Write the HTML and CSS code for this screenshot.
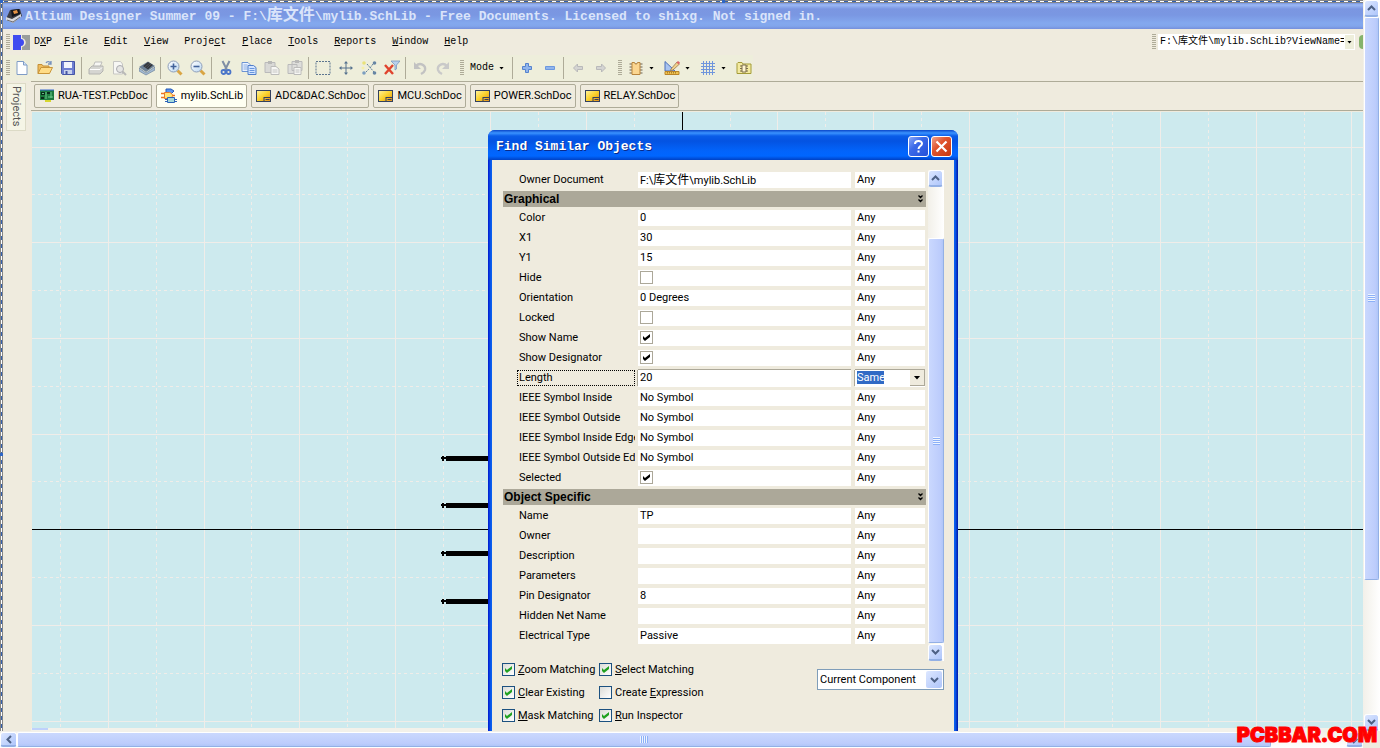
FILE: index.html
```html
<!DOCTYPE html>
<html lang="en">
<head>
<meta charset="utf-8">
<title>Altium Designer Summer 09</title>
<link rel="stylesheet" href="styles.css">
</head>
<body>
<svg width="0" height="0" class="defs" aria-hidden="true">
  <defs>
    <linearGradient id="gold" x1="0" y1="0" x2="1" y2="1"><stop offset="0" stop-color="#fff3a0"/><stop offset=".5" stop-color="#fbd22c"/><stop offset="1" stop-color="#e08a1c"/></linearGradient>
    <linearGradient id="lens" x1="0" y1="0" x2="1" y2="1"><stop offset="0" stop-color="#fff"/><stop offset="1" stop-color="#bcd8f2"/></linearGradient>
    <symbol id="sheet" viewBox="0 0 16 14"><rect x=".5" y="1.500" width="14" height="11" fill="url(#gold)" stroke="#33405e"/><path d="M8 8.500h6.500M8 8v4.500M9.500 10.500h4" stroke="#33405e" fill="none"/></symbol>
    <symbol id="chev-up" viewBox="0 0 9 6"><path d="M1 5 4.500 1.500 8 5" fill="none" stroke="#4d6185" stroke-width="2"/></symbol>
    <symbol id="chev-down" viewBox="0 0 9 6"><path d="M1 1 4.500 4.500 8 1" fill="none" stroke="#4d6185" stroke-width="2"/></symbol>
    <symbol id="collapse" viewBox="0 0 5 8"><path d="M.5 .5 2.500 2.500 4.500 .5M.5 4.500 2.500 6.500 4.500 4.500" fill="none" stroke="#000" stroke-width="1.300"/></symbol>
  </defs>
</svg>
<div class="page">
  <div class="app">
    <div class="marquee-top"></div>
    <header class="titlebar">
      <svg width="18" height="18" viewBox="0 0 18 18"><path d="M5 3 15 2l2 7-9 7-7-4z" fill="#3c3d44"/><path d="m6 3 8-1 1 5-8 3z" fill="#15161c"/><path d="m8 4 4-1 1 3-4 1z" fill="#e69445"/><path d="m1 10 6 2 9-5v3l-8 6-7-3z" fill="#d7d8dc"/><path d="m2 13 6 2 7-5" stroke="#6d6e75" fill="none"/></svg>
      <h1>Altium Designer Summer 09 - F:\<span class="cjk">库文件</span>\mylib.SchLib - Free Documents. Licensed to shixg. Not signed in.</h1>
    </header>
    <nav class="menubar">
      <span class="grip"></span>
      <button class="menu dxp"><svg width="17" height="15" viewBox="0 0 17 15"><path d="M0 0h8v4c4 0 4 7 0 7v4H0z" fill="#3f4bf0"/><path d="M9 0h8v15H9v-3c5-1 5-8 0-9z" fill="#999d9b"/></svg><span>D<u>X</u>P</span></button>
      <button class="menu"><u>F</u>ile</button>
      <button class="menu"><u>E</u>dit</button>
      <button class="menu"><u>V</u>iew</button>
      <button class="menu">Proje<u>c</u>t</button>
      <button class="menu"><u>P</u>lace</button>
      <button class="menu"><u>T</u>ools</button>
      <button class="menu"><u>R</u>eports</button>
      <button class="menu"><u>W</u>indow</button>
      <button class="menu"><u>H</u>elp</button>
      <div class="address">
        <span class="grip"></span>
        <input type="text" aria-label="Address" value="F:\库文件\mylib.SchLib?ViewName=">
        <button class="drop" aria-label="Address list"><i class="caret"></i></button>
        <button class="go" aria-label="Go"></button>
      </div>
    </nav>
    <div class="toolbar">
      <span class="grip"></span>
      <button class="tool" aria-label="New"><svg viewBox="0 0 16 16"><path d="M3 1.500h6.500L13 5v9.500H3z" fill="#fff" stroke="#7f9cc6"/><path d="M9.500 1.500V5H13" fill="#d5e3f7" stroke="#7f9cc6"/></svg></button>
      <button class="tool" aria-label="Open"><svg viewBox="0 0 16 16"><path d="M1 13.500V4.500h4l1 1.500h6v7.500z" fill="#efbd5f" stroke="#c58f35"/><path d="m1 13.500 3-6h11.500l-3 6z" fill="#ffdc86" stroke="#c99539"/><path d="M9 3c1-2 4-2 5 1m0-3v3h-3" fill="none" stroke="#7792bd" stroke-width="1.300"/></svg></button>
      <button class="tool" aria-label="Save"><svg viewBox="0 0 16 16"><path d="M1.500 1.500h13v13h-12l-1-1z" fill="#6f7fd2" stroke="#4656a5"/><path d="M4 2h8v6H4z" fill="#f1f4fc"/><path d="M4 10h8v4H4z" fill="#c8d2ec"/><path d="M5.500 11h2v3h-2z" fill="#4656a5"/></svg></button>
      <span class="sep"></span>
      <button class="tool" aria-label="Print"><svg viewBox="0 0 16 16"><path d="m5 7 2-5h7l-2 5z" fill="#f7f7f4" stroke="#bdbdba"/><path d="m1 9 3-3h11v5l-3 3H1z" fill="#d5d5d1" stroke="#b4b4b1"/><path d="M2 9.500h10l2-2" stroke="#fff" fill="none"/></svg></button>
      <button class="tool" aria-label="Print preview"><svg viewBox="0 0 16 16"><path d="M2.500 1.500h7l2 2.500v10h-9z" fill="#f7f7f4" stroke="#c6c6c3"/><circle cx="9" cy="9" r="3.500" fill="#e6e6e4" stroke="#aaaaae"/><path d="m11.500 11.500 3.500 3.500" stroke="#b9b9b7" stroke-width="2"/></svg></button>
      <span class="sep"></span>
      <button class="tool" aria-label="Browse component"><svg viewBox="0 0 16 16"><path d="m0 8 7 5 9-6v3l-9 5-7-4z" fill="#a5bbd3" stroke="#5e7690" stroke-width=".6"/><path d="m0 7 9-5.500L16 6l-9 6z" fill="#6e8298"/><path d="m4 6 5-4 5 3-5 4.500z" fill="#35383e"/><path d="m6 7 5-4M8 8l4-4" stroke="#5b6068" stroke-width=".6"/></svg></button>
      <span class="sep"></span>
      <button class="tool" aria-label="Zoom in"><svg viewBox="0 0 16 16"><path d="m10.500 10.500 4 4" stroke="#d9a544" stroke-width="3"/><circle cx="6.500" cy="6.500" r="5.500" fill="url(#lens)" stroke="#8e9fb9"/><path d="M3.500 6.500h6m-3-3v6" stroke="#41629a" stroke-width="1.600"/></svg></button>
      <button class="tool" aria-label="Zoom out"><svg viewBox="0 0 16 16"><path d="m10.500 10.500 4 4" stroke="#d9a544" stroke-width="3"/><circle cx="6.500" cy="6.500" r="5.500" fill="url(#lens)" stroke="#8e9fb9"/><path d="M3.500 6.500h6" stroke="#41629a" stroke-width="1.600"/></svg></button>
      <span class="sep"></span>
      <button class="tool" aria-label="Cut"><svg viewBox="0 0 16 16"><path d="m4.500 1 4.500 9M11.500 1 7 10" stroke="#7f8ea5" stroke-width="2" fill="none"/><circle cx="5.500" cy="12" r="2" fill="none" stroke="#4a75c9" stroke-width="1.800"/><circle cx="10.500" cy="12" r="2" fill="none" stroke="#4a75c9" stroke-width="1.800"/></svg></button>
      <button class="tool" aria-label="Copy"><svg viewBox="0 0 16 16"><path d="M1 2.500h6l2 2v7H1z" fill="#eaf2ff" stroke="#6c93d2"/><path d="M2.500 5h4m-4 2h4m-4 2h4" stroke="#88abe2"/><path d="M7 5.500h5.500l2.500 2v7H7z" fill="#d3e4ff" stroke="#4f7ecb"/><path d="M8.500 8.500h5m-5 2h5m-5 2h5" stroke="#6896dd"/></svg></button>
      <button class="tool" aria-label="Paste"><svg viewBox="0 0 16 16"><path d="M1 2.500h10v10H1z" fill="#d9d9d6" stroke="#bababa"/><path d="M4 1h4v3H4z" fill="#b9b9b7"/><path d="M7 6.500h5l3 2.500v5.500H7z" fill="#f7f7f4" stroke="#bcbcba"/><path d="M8.500 10h5m-5 2h5" stroke="#c5c5c3"/></svg></button>
      <button class="tool" aria-label="Smart paste"><svg viewBox="0 0 16 16"><path d="M5 1.500h10v9H5zM1 4.500h9v9H1z" fill="#dededb" stroke="#bababa"/><path d="M8 0h4v3H8z" fill="#b9b9b7"/><path d="M7 7.500h7v7H7z" fill="#f7f7f4" stroke="#bcbcba"/><path d="M8.500 10h4m-4 2h4" stroke="#c0c0be"/></svg></button>
      <span class="sep"></span>
      <button class="tool" aria-label="Select area"><svg viewBox="0 0 16 16"><path d="M1 1.500h14v13H1z" fill="none" stroke="#5d7690" stroke-dasharray="2 1"/></svg></button>
      <button class="tool" aria-label="Move"><svg viewBox="0 0 16 16"><path d="M8 2v12M2 8h12" stroke="#56728e"/><path d="m8 1 2 2.500H6zM8 15l2-2.500H6zM1 8l2.500-2v4zM15 8l-2.500-2v4z" fill="#56728e"/></svg></button>
      <button class="tool" aria-label="Deselect"><svg viewBox="0 0 16 16"><path d="m6 4 7 8M12 4l-3 4M5 12l3-3" stroke="#60809c" stroke-dasharray="2 1"/><circle cx="3" cy="3" r="1.800" fill="#e9e27a"/><circle cx="3" cy="13" r="1.800" fill="#7d9fc0"/><circle cx="2" cy="8" r="1.500" fill="#f5efaa"/><circle cx="13.500" cy="3" r="1.800" fill="#6685a4"/><circle cx="13.500" cy="13" r="1.800" fill="#6685a4"/></svg></button>
      <button class="tool" aria-label="Clear filter"><svg viewBox="0 0 16 16"><path d="M7 1h9l-3.500 4v4L11 10V5z" fill="#b9d0ed" stroke="#7a97bd" stroke-width=".8"/><path d="m1 5 8 9M9 5l-8 9" stroke="#e0442e" stroke-width="2.400"/></svg></button>
      <span class="sep"></span>
      <button class="tool" aria-label="Undo"><svg viewBox="0 0 16 16"><path d="M4 6c4-4 10-1 9 4-.5 2-2 3-4 4" fill="none" stroke="#c2c2c2" stroke-width="2.400"/><path d="M2 2v7h7z" fill="#c2c2c2"/></svg></button>
      <button class="tool" aria-label="Redo"><svg viewBox="0 0 16 16"><path d="M12 6C8 2 2 5 3 10c.5 2 2 3 4 4" fill="none" stroke="#c9c9c9" stroke-width="2.400"/><path d="M14 2v7H7z" fill="#c9c9c9"/></svg></button>
      <span class="grip group"></span>
      <button class="mode">Mode <i class="caret"></i></button>
      <span class="sep"></span>
      <button class="tool" aria-label="Add"><svg viewBox="0 0 16 16"><path d="M6.500 3.500h3v3h3v3h-3v3h-3v-3h-3v-3h3z" fill="#91b5ec" stroke="#5583cf"/></svg></button>
      <button class="tool" aria-label="Remove"><svg viewBox="0 0 16 16"><path d="M3.500 6.500h9v3h-9z" fill="#91b5ec" stroke="#6c98df"/></svg></button>
      <span class="sep"></span>
      <button class="tool" aria-label="Back"><svg viewBox="0 0 16 16"><path d="m3.500 8 4-4v2.500h5v3h-5V12z" fill="#d4d4d2" stroke="#b9b9ba"/></svg></button>
      <button class="tool" aria-label="Forward"><svg viewBox="0 0 16 16"><path d="m12.500 8-4-4v2.500h-5v3h5V12z" fill="#d4d4d2" stroke="#b9b9ba"/></svg></button>
      <span class="grip group"></span>
      <button class="tool" aria-label="Place part"><svg viewBox="0 0 16 16"><path d="M1.500 4h13m-13 3h13m-13 3h13m-13 3h13" stroke="#6b6353"/><path d="M4 2.500h2.500c0 2 3 2 3 0H12v12H4z" fill="#fbd690" stroke="#b9853d"/></svg></button>
      <button class="drop" aria-label="Place part list"><i class="caret"></i></button>
      <button class="tool" aria-label="Drawing tools"><svg viewBox="0 0 16 16"><path d="M1 1.500V11h10z" fill="#a9c4f0" stroke="#4b6fb9"/><path d="m7 9 6-7 2.500 2L9 10l-2.500.5z" fill="#f2d28b" stroke="#8b6b45" stroke-width=".7"/><path d="m12.500 2.500 1.500-1.500 2 1.500-1.500 2z" fill="#d66"/><path d="M1 11.500h14v3H1z" fill="#f1c350" stroke="#b98529"/><path d="M3.500 12v1.500m2-1.500v1.500m2-1.500v1.500m2-1.500v1.500m2-1.500v1.500" stroke="#8c651e" stroke-width=".7"/></svg></button>
      <button class="drop" aria-label="Drawing tools list"><i class="caret"></i></button>
      <button class="tool" aria-label="Grid"><svg viewBox="0 0 16 16"><path d="M3.500 1v14m3-14v14m3-14v14m3-14v14M1 3.500h14m-14 3h14m-14 3h14m-14 3h14" stroke="#7096dc"/></svg></button>
      <button class="drop" aria-label="Grid list"><i class="caret"></i></button>
      <button class="tool" aria-label="Library"><svg viewBox="0 0 16 16"><path d="M1 13.500v-10l1-1h4l1 1.500h8v9.500z" fill="#f3eaa0" stroke="#a49b39"/><path d="M4 6h8m-8 2.500h8M4 11h8" stroke="#7a6d4c"/><path d="M6 5h4v7H6z" fill="#fff5d2" stroke="#7a6d4c"/></svg></button>
    </div>
    <div class="body">
      <aside class="side"><button class="side-tab">Projects</button></aside>
      <main class="main">
        <div class="tabs">
          <button class="tab"><svg width="16" height="14" viewBox="0 0 16 14"><path d="M1 1h14v10H1z" fill="#1d7a3e"/><path d="M1 1h14" stroke="#3b6bd0"/><path d="M2 3h4v3H2zM2 8h3v2H2zM8 3h3v2H8z" fill="#0a2b1c"/><path d="M7 3v7M12 3v6M3 4.500h2M9 8h5" stroke="#7fe0a0" fill="none" stroke-width=".8"/><path d="M6 11h6v2H6z" fill="#d6d62f"/></svg>RUA-TEST.PcbDoc</button>
          <button class="tab active"><svg width="17" height="16" viewBox="0 0 17 16"><path d="M5 1h5l3 2-3 3H5z" fill="#5c95f0" stroke="#2256b5"/><path d="M0 5.500h4m-4 4h4m7-2h3" stroke="#ed741f" stroke-width="1.500"/><path d="M3.500 4.500h5c4 1 4 5 0 6h-5z" fill="#ffe579" stroke="#e8792b"/><path d="M6.500 9.500h7v5h-7z" fill="#a4d8d8" stroke="#2a62b8"/><path d="M4 11.500h2m-2 2h2m8-2h2m-2 2h2" stroke="#2a62b8"/></svg>mylib.SchLib</button>
          <button class="tab"><svg width="16" height="14"><use href="#sheet"/></svg>ADC&amp;DAC.SchDoc</button>
          <button class="tab"><svg width="16" height="14"><use href="#sheet"/></svg>MCU.SchDoc</button>
          <button class="tab"><svg width="16" height="14"><use href="#sheet"/></svg>POWER.SchDoc</button>
          <button class="tab"><svg width="16" height="14"><use href="#sheet"/></svg>RELAY.SchDoc</button>
        </div>
        <div class="canvas">
          <svg class="drawing" width="100%" height="100%" shape-rendering="crispEdges">
            <g class="minor"><path d="M28.500 0v2000M124.500 0v2000M219.500 0v2000M315.500 0v2000M411.500 0v2000M506.500 0v2000M602.500 0v2000M698.500 0v2000M793.500 0v2000M889.500 0v2000M985.500 0v2000M1080.500 0v2000M1176.500 0v2000M1272.500 0v2000"/><path d="M0 82.500h4000M0 178.500h4000M0 274.500h4000M0 369.500h4000M0 465.500h4000M0 561.500h4000"/></g>
            <path class="major" d="M76.500 0v2000M172.500 0v2000M267.500 0v2000M363.500 0v2000M458.500 0v2000M554.500 0v2000M745.500 0v2000M841.500 0v2000M937.500 0v2000M1032.500 0v2000M1128.500 0v2000M1224.500 0v2000M1319.500 0v2000M0 35.500h4000M0 130.500h4000M0 226.500h4000M0 322.500h4000M0 513.500h4000M0 609.500h4000"/>
            <path class="axis" d="M650.500 0v2000M0 417.500h4000"/>
            <g class="pins"><path d="M414 346.500h60M414 393.500h60M414 441.500h60M414 489.500h60" stroke-width="5"/><path d="M409 346h5M411 344v5M409 393h5M411 391v5M409 441h5M411 439v5M409 489h5M411 487v5" stroke-width="2"/></g>
          </svg>
        </div>
        <div class="inner-scroll"><i></i></div>
      </main>
    </div>
    <div class="marquee-left"></div>
    <i class="handle corner"></i><i class="handle top"></i><i class="handle left"></i>

    <section class="dialog" role="dialog" aria-labelledby="dlg-title">
      <header class="dlg-title">
        <h2 id="dlg-title">Find Similar Objects</h2>
        <button class="help" aria-label="Help"><svg width="19" height="19" viewBox="0 0 19 19"><path d="M6 7c0-4 7-4 7-.5 0 2.500-3.500 2.500-3.500 5.500M9.500 13.500v2" fill="none" stroke="#fff" stroke-width="2"/></svg></button>
        <button class="close" aria-label="Close"><svg width="19" height="19" viewBox="0 0 19 19"><path d="m4.500 4.500 10 10m0-10-10 10" stroke="#fff" stroke-width="2.200"/></svg></button>
      </header>
      <div class="dlg-body">
        <div class="pane">
          <table class="props">
            <colgroup><col class="c-name"><col class="c-value"><col class="c-match"></colgroup>
            <tbody>
            <tr><th><div>Owner Document</div></th><td><div>F:\<span class="cjk">库文件</span>\mylib.SchLib</div></td><td><div>Any</div></td></tr>
            <tr class="group"><th colspan="3"><div>Graphical<svg width="5" height="8"><use href="#collapse"/></svg></div></th></tr>
            <tr><th><div>Color</div></th><td><div>0</div></td><td><div>Any</div></td></tr>
            <tr><th><div>X1</div></th><td><div>30</div></td><td><div>Any</div></td></tr>
            <tr><th><div>Y1</div></th><td><div>15</div></td><td><div>Any</div></td></tr>
            <tr><th><div>Hide</div></th><td><div><input type="checkbox" aria-label="Hide"></div></td><td><div>Any</div></td></tr>
            <tr><th><div>Orientation</div></th><td><div>0 Degrees</div></td><td><div>Any</div></td></tr>
            <tr><th><div>Locked</div></th><td><div><input type="checkbox" aria-label="Locked"></div></td><td><div>Any</div></td></tr>
            <tr><th><div>Show Name</div></th><td><div><input type="checkbox" aria-label="Show Name" checked></div></td><td><div>Any</div></td></tr>
            <tr><th><div>Show Designator</div></th><td><div><input type="checkbox" aria-label="Show Designator" checked></div></td><td><div>Any</div></td></tr>
            <tr class="current"><th><div>Length</div></th><td><div><input type="text" aria-label="Length" value="20"></div></td><td><div><select aria-label="Length match"><option>Same</option><option>Any</option><option>Different</option></select><span class="arrow"><i class="caret"></i></span></div></td></tr>
            <tr><th><div>IEEE Symbol Inside</div></th><td><div>No Symbol</div></td><td><div>Any</div></td></tr>
            <tr><th><div>IEEE Symbol Outside</div></th><td><div>No Symbol</div></td><td><div>Any</div></td></tr>
            <tr><th><div>IEEE Symbol Inside Edge</div></th><td><div>No Symbol</div></td><td><div>Any</div></td></tr>
            <tr><th><div>IEEE Symbol Outside Edge</div></th><td><div>No Symbol</div></td><td><div>Any</div></td></tr>
            <tr><th><div>Selected</div></th><td><div><input type="checkbox" aria-label="Selected" checked></div></td><td><div>Any</div></td></tr>
            <tr class="group"><th colspan="3"><div>Object Specific<svg width="5" height="8"><use href="#collapse"/></svg></div></th></tr>
            <tr><th><div>Name</div></th><td><div>TP</div></td><td><div>Any</div></td></tr>
            <tr><th><div>Owner</div></th><td><div></div></td><td><div>Any</div></td></tr>
            <tr><th><div>Description</div></th><td><div></div></td><td><div>Any</div></td></tr>
            <tr><th><div>Parameters</div></th><td><div></div></td><td><div>Any</div></td></tr>
            <tr><th><div>Pin Designator</div></th><td><div>8</div></td><td><div>Any</div></td></tr>
            <tr><th><div>Hidden Net Name</div></th><td><div></div></td><td><div>Any</div></td></tr>
            <tr><th><div>Electrical Type</div></th><td><div>Passive</div></td><td><div>Any</div></td></tr>
            </tbody>
          </table>
          <div class="scroll vert small">
            <button aria-label="Scroll up"><svg width="9" height="6"><use href="#chev-up"/></svg></button>
            <div class="thumb list-thumb"><i></i></div>
            <button aria-label="Scroll down"><svg width="9" height="6"><use href="#chev-down"/></svg></button>
          </div>
        </div>
        <div class="footer">
          <div class="options">
            <label><input type="checkbox" checked><span><u>Z</u>oom Matching</span></label>
            <label><input type="checkbox" checked><span><u>S</u>elect Matching</span></label>
            <label><input type="checkbox" checked><span><u>C</u>lear Existing</span></label>
            <label><input type="checkbox"><span>Create <u>E</u>xpression</span></label>
            <label><input type="checkbox" checked><span><u>M</u>ask Matching</span></label>
            <label><input type="checkbox" checked><span><u>R</u>un Inspector</span></label>
          </div>
          <div class="scope">
            <select aria-label="Scope"><option>Current Component</option><option>All Components</option></select>
            <span class="arrow"><svg width="9" height="6"><use href="#chev-down"/></svg></span>
          </div>
        </div>
      </div>
    </section>
  </div>
  <div class="scroll vert">
    <button aria-label="Scroll up"><svg width="9" height="6"><use href="#chev-up"/></svg></button>
    <div class="thumb page-thumb"><i></i></div>
    <button aria-label="Scroll down"><svg width="9" height="6"><use href="#chev-down"/></svg></button>
  </div>
  <div class="scroll horiz">
    <button aria-label="Scroll left"><svg width="6" height="9" viewBox="0 0 6 9"><path d="M5 1 1.500 4.500 5 8" fill="none" stroke="#4d6185" stroke-width="2"/></svg></button>
    <div class="thumb wide-thumb"><i></i></div>
    <button aria-label="Scroll right"><svg width="6" height="9" viewBox="0 0 6 9"><path d="M1 1 4.500 4.500 1 8" fill="none" stroke="#4d6185" stroke-width="2"/></svg></button>
  </div>
  <div class="watermark">PCBBAR.COM</div>
</div>
</body>
</html>
```
FILE: styles.css
```css
* { box-sizing: border-box; }
html, body { height: 100%; margin: 0; }
body {
  overflow: hidden;
  font: 11px/16px Roboto, "Noto Sans CJK SC", sans-serif;
  color: #000;
  background: #efebde;
}
button, input, select { font: inherit; color: inherit; margin: 0; padding: 0; border: 0; border-radius: 0; background: none; }
button { display: flex; align-items: center; justify-content: center; flex: none; }
select, input[type="checkbox"] { appearance: none; }
h1, h2 { margin: 0; }
svg { display: block; flex: none; }
.defs { position: absolute; }

.page { position: relative; height: 100%; display: grid; grid-template: minmax(0, 1fr) 17px / minmax(0, 1fr) 17px; }
.app { position: relative; display: flex; flex-direction: column; overflow: hidden; padding-left: 3px; background: #efebde; }

/* Selection outline around the embedded window */
.marquee-top, .marquee-left { border: 0 solid #858585; flex: none; }
.marquee-top { height: 3px; margin-left: -3px; border-width: 1px 0; background: repeating-linear-gradient(90deg, #fff 0 4px, #3461ae 4px 8px); }
.marquee-left { position: absolute; left: 0; top: 0; bottom: 0; width: 3px; border-width: 0 1px; background: repeating-linear-gradient(#fff 0 4px, #3461ae 4px 8px); }
.handle { position: absolute; width: 3px; height: 3px; background: #2f66c4; }
.handle.corner { left: 0; top: 0; }
.handle.top { left: 53%; top: 0; }
.handle.left { left: 0; top: 62%; }

.titlebar {
  display: flex; align-items: center; gap: 2px; height: 26px; flex: none; padding-left: 2px;
  background: linear-gradient(#7a96df, #9bb8f5 2px, #7b96e1 6px, #7a97e2 12px, #83a8ee 20px, #82a6ec 23px, #7590dc);
}
.titlebar h1 { font: bold 13px/20px "Liberation Mono", "Noto Sans CJK SC", monospace; color: #dae4fa; white-space: nowrap; }
.titlebar .cjk { font-size: 16px; }

.grip { flex: none; width: 4px; height: 16px; background: repeating-linear-gradient(#aeab98 0 1px, transparent 1px 2px); }
.menubar { display: flex; align-items: center; height: 26px; flex: none; padding-left: 3px; font: 10px/16px "Liberation Mono", "Noto Sans CJK SC", monospace; }
.menu { margin-right: 16px; }
.menu.dxp { gap: 4px; margin: 0 12px 0 3px; }
.address { display: flex; align-items: center; height: 26px; margin-left: auto; overflow: hidden; width: 211px; }
.address input { flex: 1; min-width: 0; height: 16px; margin-left: 2px; padding-left: 2px; background: #fff; }
.address .drop { width: 11px; height: 16px; background: #eeeedb; border: 1px solid #fff; }
.go { width: 4px; height: 14px; margin-left: 4px; border-radius: 8px 0 0 8px; background: #85b36b; }
.caret { display: block; flex: none; width: 5px; height: 3px; background: #000; clip-path: polygon(0 0, 100% 0, 50% 100%); }

.toolbar { display: flex; align-items: center; height: 26px; flex: none; width: 750px; padding-left: 3px; background: #eeeedb; }
.tool { width: 23px; height: 22px; }
.tool svg { width: 16px; height: 16px; }
.sep { flex: none; width: 1px; height: 22px; margin: 0 2px; background: #aeab98; }
.grip.group { margin: 0 2px 0 6px; }
.mode { justify-content: flex-start; gap: 5px; width: 44px; padding-left: 4px; font: 10px/16px "Liberation Mono", monospace; }
.toolbar .drop { justify-content: flex-start; width: 13px; height: 22px; padding-left: 2px; }

.body { flex: 1; min-height: 0; display: flex; }
.side { width: 28px; flex: none; padding: 2px 0 0 3px; }
.side-tab { width: 20px; padding: 2px 0 4px; writing-mode: vertical-rl; background: #f5f5e6; border: 1px solid #dcdac6; color: #555; }
.main { flex: 1; min-width: 0; display: flex; flex-direction: column; }
.tabs { display: flex; gap: 4px; height: 30px; flex: none; padding: 2px 3px; border: 1px solid #aeab98; border-width: 1px 0; }
.tab { height: 24px; gap: 3px; padding: 0 3px 0 4px; border: 1px solid #aeab98; border-radius: 2px; white-space: nowrap; }
.tab.active { background: #fffff2; }
.canvas { flex: 1; min-height: 0; margin: 1px 0 0 1px; background: #cdeaee; overflow: hidden; }
.minor { fill: none; stroke: #f0ede9; stroke-dasharray: 3 3; }
.major { fill: none; stroke: #f0ede9; }
.axis, .pins { fill: none; stroke: #000; }
.inner-scroll { height: 3px; flex: none; background: #f3f1ea; }
.inner-scroll i { display: block; width: 16px; height: 2px; margin-left: 1px; background: #bfd1fb; }

.dialog {
  position: absolute; left: 488px; top: 130px; width: 470px; overflow: hidden;
  border-radius: 7px 7px 0 0;
  background: linear-gradient(90deg, #0019cf, #0a5fee 3px, #0a5fee 467px, #0016a8);
}
.dlg-title {
  display: flex; align-items: center; gap: 2px; height: 30px; padding: 3px 6px 0 8px;
  background: linear-gradient(#0a46c8, #3a93ff 3px, #0a5de8 6px, #0453e2 11px, #0264fb 21px, #0066ff 26px, #0041c4);
}
.dlg-title h2 { flex: 1; font: bold 13px/20px "Liberation Mono", monospace; color: #fff; text-shadow: 1px 1px #0b2a88; }
.dlg-title button { width: 21px; height: 21px; border: 1px solid #fff; border-radius: 3px; }
.help { background: linear-gradient(135deg, #8aa8f8, #3b69e8 40%, #2350d8); }
.close { background: linear-gradient(135deg, #f0a28c, #e0552f 40%, #c8380f); }
.dlg-body { margin: 0 4px; padding: 10px 10px 10px 11px; background: #efebde; }
.pane { display: flex; justify-content: space-between; min-height: 491px; }

.props { align-self: flex-start; table-layout: fixed; width: 423px; border-collapse: separate; border-spacing: 0; }
.c-name { width: 135px; }
.c-value { width: 217px; }
.props th, .props td { padding: 2px 4px 2px 0; font-weight: normal; text-align: left; white-space: nowrap; }
.props td:last-child { padding-right: 1px; }
.props div { height: 16px; overflow: hidden; }
.props td div { padding-left: 2px; background: #fff; }
.props th div { margin: 0 -1px 0 14px; padding-left: 2px; }
.props .cjk { font-size: 12px; }
.props .group th { padding: 1px 0; font-weight: bold; font-size: 12px; font-family: "Liberation Sans", sans-serif; }
.props .group div { display: flex; align-items: center; justify-content: space-between; margin: 0; padding: 0 3px 0 1px; background: #aca899; }
.props input[type="checkbox"] { display: block; width: 13px; height: 13px; margin-top: 1px; border: 1px solid #aca899; background: #fff; }
input[type="checkbox"]:checked::before { content: ""; display: block; width: 7px; height: 7px; margin: 2px; background: #000; clip-path: polygon(0 28%, 28% 57%, 100% 0, 100% 42%, 28% 100%, 0 72%); }
.props .current th div { outline: 1px dotted #000; outline-offset: -1px; }
.props .current td div { display: flex; box-shadow: 0 -1px #aca899, -1px 0 #aca899, 0 1px #fff; }
.props input[type="text"] { width: 100%; }
.current select { flex: 1; min-width: 0; background: linear-gradient(#316ac5, #316ac5) 0 1px / 27px 13px no-repeat; color: #fff; }
.current option { color: #000; }
.current .arrow { display: flex; align-items: center; justify-content: center; width: 15px; background: #efebde; border: 1px solid #aca899; border-width: 0 1px 1px 0; pointer-events: none; }
.current .arrow .caret { width: 7px; height: 4px; }

.footer { display: flex; justify-content: space-between; align-items: flex-start; }
.options { display: grid; grid-template-columns: 97px auto; grid-auto-rows: 23px; margin: -3px 0 0 -1px; }
.options label { display: flex; align-items: center; gap: 3px; white-space: nowrap; }
.options input { flex: none; width: 13px; height: 13px; border: 1px solid #1c5180; background: linear-gradient(135deg, #dcdcd7, #fff); }
.options input:checked::before { background: #21a121; }
.scope { display: flex; width: 127px; height: 21px; margin-top: 8px; padding: 1px; border: 1px solid #7f9db9; background: #fff; }
.scope select { flex: 1; min-width: 0; padding-left: 1px; margin-right: -17px; }
.scope .arrow { display: flex; align-items: center; justify-content: center; width: 16px; margin-left: auto; border-radius: 2px; background: linear-gradient(135deg, #dde7ff, #aec5fa); pointer-events: none; }

.scroll { display: flex; background: linear-gradient(90deg, #f2f0e9, #fff); }
.scroll.vert { flex-direction: column; width: 17px; padding: 0 1px; }
.scroll.vert.small { width: 16px; padding: 0; }
.scroll.horiz { height: 17px; padding: 1px 0; background: linear-gradient(#f2f0e9, #fff); }
.scroll button { width: 15px; height: 17px; border: 1px solid #fff; border-bottom: 2px solid #93b0e5; border-radius: 3px; background: linear-gradient(135deg, #dbe6ff, #afc6fb); }
.scroll.horiz button { width: 17px; height: 15px; }
.scroll button:last-child { margin-top: auto; }
.scroll.horiz button:last-child { margin: 0 0 0 auto; }
.thumb { display: flex; align-items: center; justify-content: center; border: 1px solid #fff; border-right-color: #93b0e5; border-bottom-color: #93b0e5; border-radius: 2px; background: linear-gradient(90deg, #cad8fe, #bcccfc 80%, #b0c6f8); }
.horiz .thumb { background: linear-gradient(#cad8fe, #bcccfc 80%, #b0c6f8); }
.page-thumb { height: 77%; }
.list-thumb { height: 405px; margin-top: 51px; }
.wide-thumb { width: 92%; }
.thumb i { width: 7px; height: 8px; background: repeating-linear-gradient(#eef4fe 0 1px, #8cb0f8 1px 2px); }
.horiz .thumb i { width: 8px; height: 7px; background: repeating-linear-gradient(90deg, #eef4fe 0 1px, #8cb0f8 1px 2px); }

.watermark { position: absolute; right: 3px; bottom: 3px; font: 900 20px/20px Inter, sans-serif; color: #f00; -webkit-text-stroke: 1px #f00; }
```
